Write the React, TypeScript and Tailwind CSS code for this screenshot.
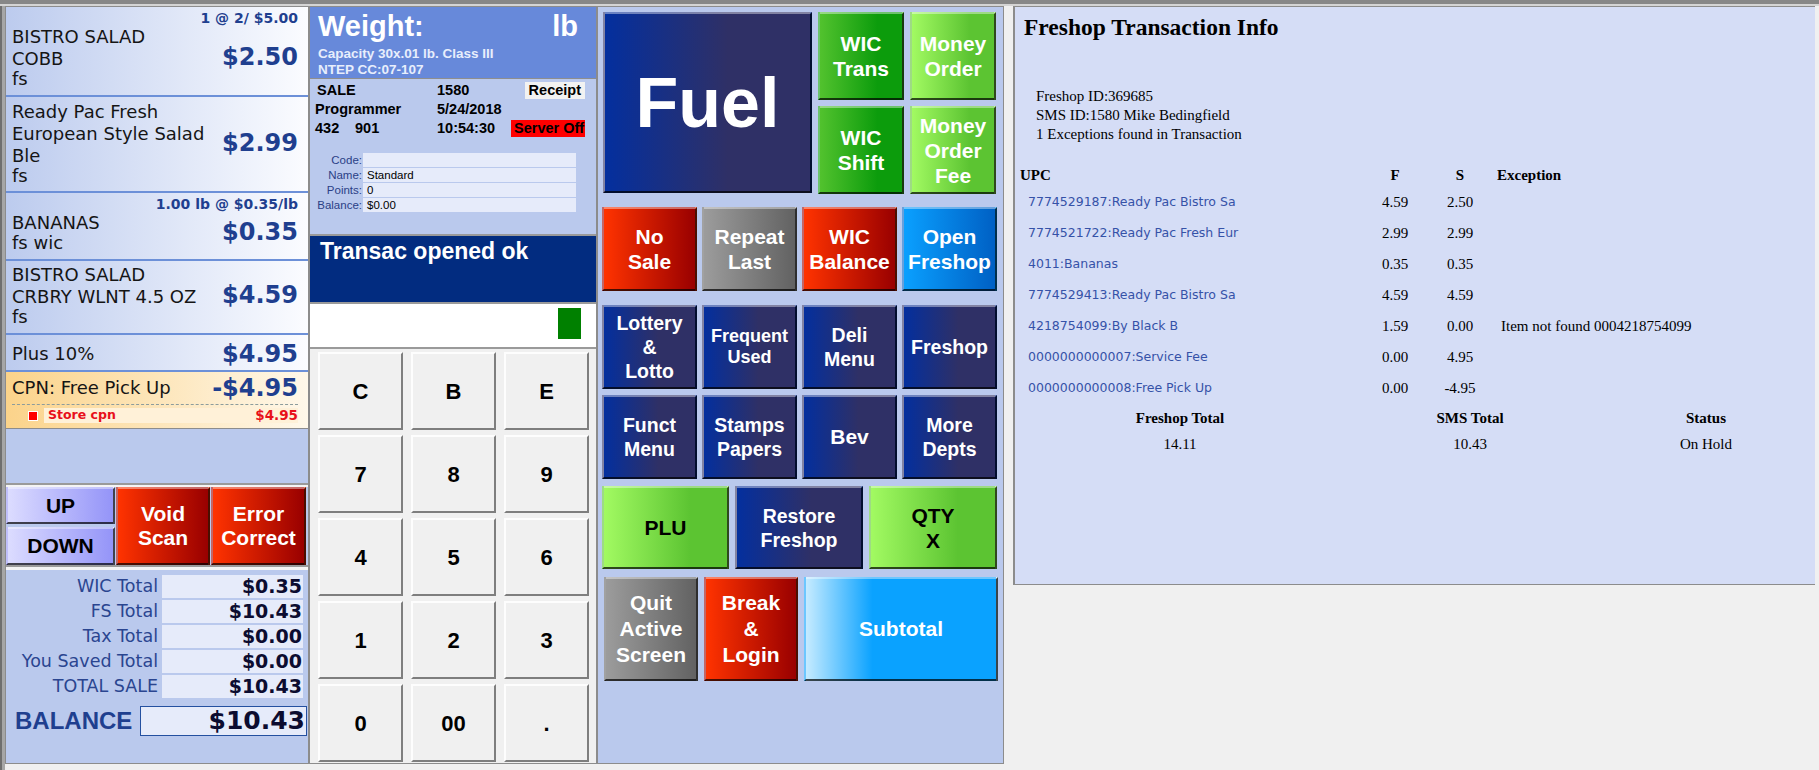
import { Fragment } from "react";

const VERD = "font-['DejaVu_Sans',Verdana,sans-serif]";
const ARIAL = "font-['Liberation_Sans',Arial,sans-serif]";
const SERIF = "font-['Liberation_Serif','Times_New_Roman',serif]";

const BTN = `flex items-center justify-center text-center font-bold ${ARIAL} border-2 border-t-white/40 border-l-white/40 border-r-black/70 border-b-black/70`;
const NAVY = "bg-[linear-gradient(90deg,#042f9e,#2f3066_60%)] text-white";
const RED = "bg-[linear-gradient(90deg,#ff3300,#990000)] text-white";
const GRAY = "bg-[linear-gradient(90deg,#9c9c9c,#626262)] text-white";
const GREEN = "bg-[linear-gradient(90deg,#52c22e,#0c9c0c_70%)] text-white";
const LIME = "bg-[linear-gradient(90deg,#a2fa62,#5cc432_70%)]";
const SKY = "bg-[linear-gradient(90deg,#0aa0ff,#0060c4)] text-white";
const SUB = "bg-[linear-gradient(90deg,#c6ebff,#0aa2ff_35%)] text-white";

interface Item {
  box: string;
  note?: string;
  name: string[];
  tags?: string;
  price: string;
}

const items: Item[] = [
  { box: "h-[90px] pt-[3px]", note: "1 @ 2/ $5.00", name: ["BISTRO SALAD", "COBB"], tags: "fs", price: "$2.50" },
  { box: "h-[96px] pt-[4px]", name: ["Ready Pac Fresh", "European Style Salad", "Ble"], tags: "fs", price: "$2.99" },
  { box: "h-[68px] pt-[3px]", note: "1.00 lb @ $0.35/lb", name: ["BANANAS"], tags: "fs wic", price: "$0.35" },
  { box: "h-[74px] pt-[3px]", name: ["BISTRO SALAD", "CRBRY WLNT 4.5 OZ"], tags: "fs", price: "$4.59" },
  { box: "h-[37px] pt-[1px]", name: ["Plus 10%"], price: "$4.95" },
];

const totals = [
  ["WIC Total", "$0.35"],
  ["FS Total", "$10.43"],
  ["Tax Total", "$0.00"],
  ["You Saved Total", "$0.00"],
  ["TOTAL SALE", "$10.43"],
];

const customer = [
  ["Code:", ""],
  ["Name:", "Standard"],
  ["Points:", "0"],
  ["Balance:", "$0.00"],
];

const keys = ["C", "B", "E", "7", "8", "9", "4", "5", "6", "1", "2", "3", "0", "00", "."];

const upcRows = [
  ["7774529187:Ready Pac Bistro Sa", "4.59", "2.50", ""],
  ["7774521722:Ready Pac Fresh Eur", "2.99", "2.99", ""],
  ["4011:Bananas", "0.35", "0.35", ""],
  ["7774529413:Ready Pac Bistro Sa", "4.59", "4.59", ""],
  ["4218754099:By Black B", "1.59", "0.00", "Item not found 0004218754099"],
  ["0000000000007:Service Fee", "0.00", "4.95", ""],
  ["0000000000008:Free Pick Up", "0.00", "-4.95", ""],
];

function ItemRow({ item }: { item: Item }) {
  return (
    <div className={`${item.box} border-b-2 border-[#6c90d8] bg-[linear-gradient(90deg,#bccbee,#fbfcff)] pl-[6px] pr-[10px] ${VERD}`}>
      {item.note && (
        <div className="text-right text-[14px] font-bold leading-[16px] text-[#1f3f8f]">{item.note}</div>
      )}
      <div className="flex items-center justify-between">
        <div className="whitespace-nowrap text-[18px] text-[#151515]">
          {item.name.map(n => (
            <div key={n} className="leading-[22px]">{n}</div>
          ))}
          {item.tags && <div className="leading-[18px]">{item.tags}</div>}
        </div>
        <div className="text-[24px] font-bold text-[#1f3f8f]">{item.price}</div>
      </div>
    </div>
  );
}

function ReceiptPanel() {
  return (
    <aside className="flex h-[758px] w-[305px] shrink-0 flex-col border-y border-l border-r-2 border-[#8c8c8c] bg-[#bac9ed]">
      {items.map(it => <ItemRow key={it.price + it.name[0]} item={it} />)}

      <div className={`h-[57px] border-b border-[#8c8c8c] bg-[linear-gradient(90deg,#fbd38a,#fff8ea)] pl-[6px] pr-[10px] pt-[4px] ${VERD}`}>
        <div className="flex h-[24px] items-center justify-between">
          <span className="text-[18px] leading-[22px] text-[#151515]">CPN: Free Pick Up</span>
          <span className="text-[24px] font-bold text-[#1f3f8f]">-$4.95</span>
        </div>
        <div className="mt-[4px] border-t border-dashed border-[#8c9c9c]" />
        <div className="mt-[3px] flex h-[15px] items-center">
          <span className="ml-[17px] h-[8px] w-[8px] bg-[#ff0000] ring-1 ring-white" />
          <div className="ml-[7px] flex h-[15px] flex-1 items-center justify-between bg-[#fff1d8] pl-[4px] text-[#e8101a]">
            <span className="text-[12.5px] font-bold">Store cpn</span>
            <span className="text-[13.5px] font-bold">$4.95</span>
          </div>
        </div>
      </div>

      <div className="h-[54px]" />
      <div className="h-[4px] border-t-2 border-[#9a9a9a] bg-[#f4f4f4]" />

      <div className={`grid h-[78px] grid-cols-[109px_94px_95px] gap-x-px ${ARIAL}`}>
        <div className="flex flex-col gap-[3px]">
          <div className={`${BTN} h-[37px] bg-[linear-gradient(90deg,#dcdcff,#9494f8)] text-[21px] text-black`}>UP</div>
          <div className={`${BTN} h-[38px] bg-[linear-gradient(90deg,#dcdcff,#9494f8)] text-[21px] text-black`}>DOWN</div>
        </div>
        <div className={`${BTN} ${RED} text-[21px] leading-[24px]`}>Void<br />Scan</div>
        <div className={`${BTN} ${RED} text-[21px] leading-[24px]`}>Error<br />Correct</div>
      </div>

      <div className="h-[5px] border-t-2 border-[#9a9a9a] bg-[#f4f4f4]" />

      <div className={`h-[193px] pt-[5px] ${VERD}`}>
        <div className="grid grid-cols-[152px_141px] gap-x-[4px] gap-y-[2px]">
          {totals.map(([l, v]) => (
            <Fragment key={l}>
              <div className="h-[23px] whitespace-nowrap text-right text-[17.5px] leading-[23px] text-[#2a4590]">{l}</div>
              <div className="h-[23px] bg-[#e6ebfa] pr-[1px] text-right text-[19px] font-bold leading-[23px] text-[#0c0c30]">{v}</div>
            </Fragment>
          ))}
        </div>
        <div className="mt-[8px] flex h-[30px] items-center">
          <span className={`ml-[9px] text-[24px] font-bold text-[#1f3f8f] ${ARIAL}`}>BALANCE</span>
          <div className="ml-auto mr-px h-[30px] w-[167px] border border-[#2450a0] bg-[#e6ebfa] pr-px text-right text-[25px] font-bold leading-[28px] text-[#0c0c30]">
            $10.43
          </div>
        </div>
      </div>
    </aside>
  );
}

function ScalePanel() {
  return (
    <section className={`flex h-[758px] w-[288px] shrink-0 flex-col border-y border-r-2 border-[#8c8c8c] ${ARIAL}`}>
      <div className="h-[71px] bg-[#6789da] pl-[8px] pr-[18px] pt-[5px] font-bold text-white">
        <div className="flex justify-between text-[29px] leading-none">
          <span>Weight:</span>
          <span>lb</span>
        </div>
        <div className="mt-[5px] text-[13.5px] leading-[16px] text-[#e8eefc]">
          <div>Capacity 30x.01 lb. Class III</div>
          <div>NTEP CC:07-107</div>
        </div>
      </div>
      <div className="h-px bg-[#8e8e8e]" />

      <div className="h-[155px] bg-[#bac9ed] pt-[2px] text-black">
        <div className="flex h-[19px] items-center text-[14.5px] font-bold">
          <span className="w-[127px] pl-[7px]">SALE</span>
          <span>1580</span>
          <span className="ml-auto mr-[11px] h-[17px] bg-[#f2f2f2] px-[4px] leading-[17px]">Receipt</span>
        </div>
        <div className="flex h-[19px] items-center text-[14.5px] font-bold">
          <span className="w-[127px] pl-[5px]">Programmer</span>
          <span>5/24/2018</span>
        </div>
        <div className="flex h-[19px] items-center text-[14.5px] font-bold">
          <span className="w-[45px] pl-[5px]">432</span>
          <span className="w-[82px]">901</span>
          <span>10:54:30</span>
          <span className="ml-auto mr-[11px] h-[17px] w-[74px] overflow-hidden whitespace-nowrap bg-[#ff0000] pl-[3px] leading-[17px]">Server Off</span>
        </div>
        <div className="mt-[15px] flex flex-col gap-px">
          {customer.map(([l, v]) => (
            <div key={l} className="flex h-[14px] text-[11.5px] leading-[14px]">
              <span className="w-[53px] pr-px text-right text-[#2a3f86]">{l}</span>
              <span className="w-[213px] bg-[#e6ebfa] pl-[4px] text-black">{v}</span>
            </div>
          ))}
        </div>
      </div>

      <div className="h-[2px] bg-[#9a9a9a]" />
      <div className="h-[66px] bg-[#022c80] pl-[10px] pt-[4px] text-[23px] font-bold leading-none text-white">Transac opened ok</div>
      <div className="h-[2px] bg-[#9a9a9a]" />
      <div className="flex h-[43px] justify-end bg-white pr-[15px] pt-[4px]">
        <div className="h-[31px] w-[23px] bg-[#008000]" />
      </div>
      <div className="h-[2px] bg-[#9a9a9a]" />

      <div className="flex-1 bg-[#f0f0f0] pl-[8px] pt-[3px]">
        <div className="grid grid-cols-[85px_85px_85px] grid-rows-[78px_78px_78px_78px_78px] gap-x-[8px] gap-y-[5px]">
          {keys.map(k => (
            <div key={k} className="flex items-center justify-center border-2 border-t-[#fdfdfd] border-l-[#fdfdfd] border-r-[#7e7e7e] border-b-[#7e7e7e] bg-[#f0f0f0] text-[22px] font-bold text-black">
              {k}
            </div>
          ))}
        </div>
      </div>
    </section>
  );
}

function KeysPanel() {
  return (
    <section className="h-[758px] w-[406px] shrink-0 border-y border-r border-[#8c8c8c] bg-[#bac9ed]">
      <div className="flex gap-[6px] pl-[5px] pt-[5px]">
        <div className={`${BTN} ${NAVY} h-[181px] w-[209px] text-[70px] leading-none`}>Fuel</div>
        <div className="grid grid-cols-[86px_86px] grid-rows-[88px_88px] gap-[6px] text-[21px] leading-[25px]">
          <div className={`${BTN} ${GREEN}`}>WIC<br />Trans</div>
          <div className={`${BTN} ${LIME} text-white`}>Money<br />Order</div>
          <div className={`${BTN} ${GREEN}`}>WIC<br />Shift</div>
          <div className={`${BTN} ${LIME} text-white`}>Money<br />Order<br />Fee</div>
        </div>
      </div>

      <div className="ml-[4px] mt-[13px] grid grid-cols-[95px_95px_95px_95px] gap-x-[5px] text-[21px] leading-[25px]">
        <div className={`${BTN} ${RED} h-[84px]`}>No<br />Sale</div>
        <div className={`${BTN} ${GRAY} h-[84px]`}>Repeat<br />Last</div>
        <div className={`${BTN} ${RED} h-[84px]`}>WIC<br />Balance</div>
        <div className={`${BTN} ${SKY} h-[84px]`}>Open<br />Freshop</div>
      </div>

      <div className="ml-[4px] mt-[14px] grid grid-cols-[95px_95px_95px_95px] gap-x-[5px] text-[19.5px] leading-[24px]">
        <div className={`${BTN} ${NAVY} h-[84px]`}>Lottery<br />&amp;<br />Lotto</div>
        <div className={`${BTN} ${NAVY} h-[84px] text-[18px] leading-[21px]`}>Frequent<br />Used</div>
        <div className={`${BTN} ${NAVY} h-[84px]`}>Deli<br />Menu</div>
        <div className={`${BTN} ${NAVY} h-[84px]`}>Freshop</div>
      </div>

      <div className="ml-[4px] mt-[6px] grid grid-cols-[95px_95px_95px_95px] gap-x-[5px] text-[19.5px] leading-[24px]">
        <div className={`${BTN} ${NAVY} h-[84px]`}>Funct<br />Menu</div>
        <div className={`${BTN} ${NAVY} h-[84px]`}>Stamps<br />Papers</div>
        <div className={`${BTN} ${NAVY} h-[84px] text-[21px]`}>Bev</div>
        <div className={`${BTN} ${NAVY} h-[84px]`}>More<br />Depts</div>
      </div>

      <div className="ml-[4px] mt-[7px] grid grid-cols-[127px_128px_128px] gap-x-[6px]">
        <div className={`${BTN} ${LIME} h-[83px] text-[21px] text-black`}>PLU</div>
        <div className={`${BTN} ${NAVY} h-[83px] text-[19.5px] leading-[24px]`}>Restore<br />Freshop</div>
        <div className={`${BTN} ${LIME} h-[83px] text-[21px] leading-[25px] text-black`}>QTY<br />X</div>
      </div>

      <div className="ml-[6px] mt-[8px] grid grid-cols-[94px_94px_194px] gap-x-[6px] text-[21px] leading-[26px]">
        <div className={`${BTN} ${GRAY} h-[104px]`}>Quit<br />Active<br />Screen</div>
        <div className={`${BTN} ${RED} h-[104px]`}>Break<br />&amp;<br />Login</div>
        <div className={`${BTN} ${SUB} h-[104px]`}>Subtotal</div>
      </div>
    </section>
  );
}

function FreshopPanel() {
  return (
    <section className={`ml-[9px] h-[579px] w-[802px] shrink-0 border-y border-l-2 border-[#8c8c8c] bg-[#d5ddf6] text-black ${SERIF}`}>
      <div className="pl-[9px] pt-[9px] text-[23.5px] font-bold leading-none">Freshop Transaction Info</div>
      <div className="mt-[47px] pl-[21px] text-[15px] leading-[19px]">
        <div>Freshop ID:369685</div>
        <div>SMS ID:1580 Mike Bedingfield</div>
        <div>1 Exceptions found in Transaction</div>
      </div>

      <div className="mt-[22px] grid grid-cols-[340px_70px_60px_1fr] pl-[5px] text-[15px]">
        <div className="h-[19px] font-bold leading-[19px]">UPC</div>
        <div className="h-[19px] text-center font-bold leading-[19px]">F</div>
        <div className="h-[19px] text-center font-bold leading-[19px]">S</div>
        <div className="h-[19px] pl-[7px] font-bold leading-[19px]">Exception</div>
        <div className="col-span-4 h-[2px]" />
        {upcRows.map(([upc, f, s, ex]) => (
          <Fragment key={upc}>
            <div className={`flex h-[31px] items-center pl-[8px] text-[12.5px] text-[#3552a8] ${VERD}`}>{upc}</div>
            <div className="flex h-[31px] items-center justify-center">{f}</div>
            <div className="flex h-[31px] items-center justify-center">{s}</div>
            <div className="flex h-[31px] items-center pl-[11px]">{ex}</div>
          </Fragment>
        ))}
      </div>

      <div className="mt-px grid grid-cols-[320px_260px_212px] pl-[5px] text-center text-[15px] leading-[26px]">
        <div className="font-bold">Freshop Total</div>
        <div className="font-bold">SMS Total</div>
        <div className="font-bold">Status</div>
        <div>14.11</div>
        <div>10.43</div>
        <div>On Hold</div>
      </div>
    </section>
  );
}

export default function App() {
  return (
    <div className="h-[770px] w-[1819px] overflow-hidden bg-[#f0f0f0]">
      <div className="h-[6px] border-t-4 border-[#878787] bg-[#d4d4d4]" />
      <div className="flex items-start">
        <div className="h-[764px] w-[5px] shrink-0 border-l-2 border-[#6f6f6f] bg-[#a6a6a6]" />
        <ReceiptPanel />
        <ScalePanel />
        <KeysPanel />
        <FreshopPanel />
      </div>
    </div>
  );
}
